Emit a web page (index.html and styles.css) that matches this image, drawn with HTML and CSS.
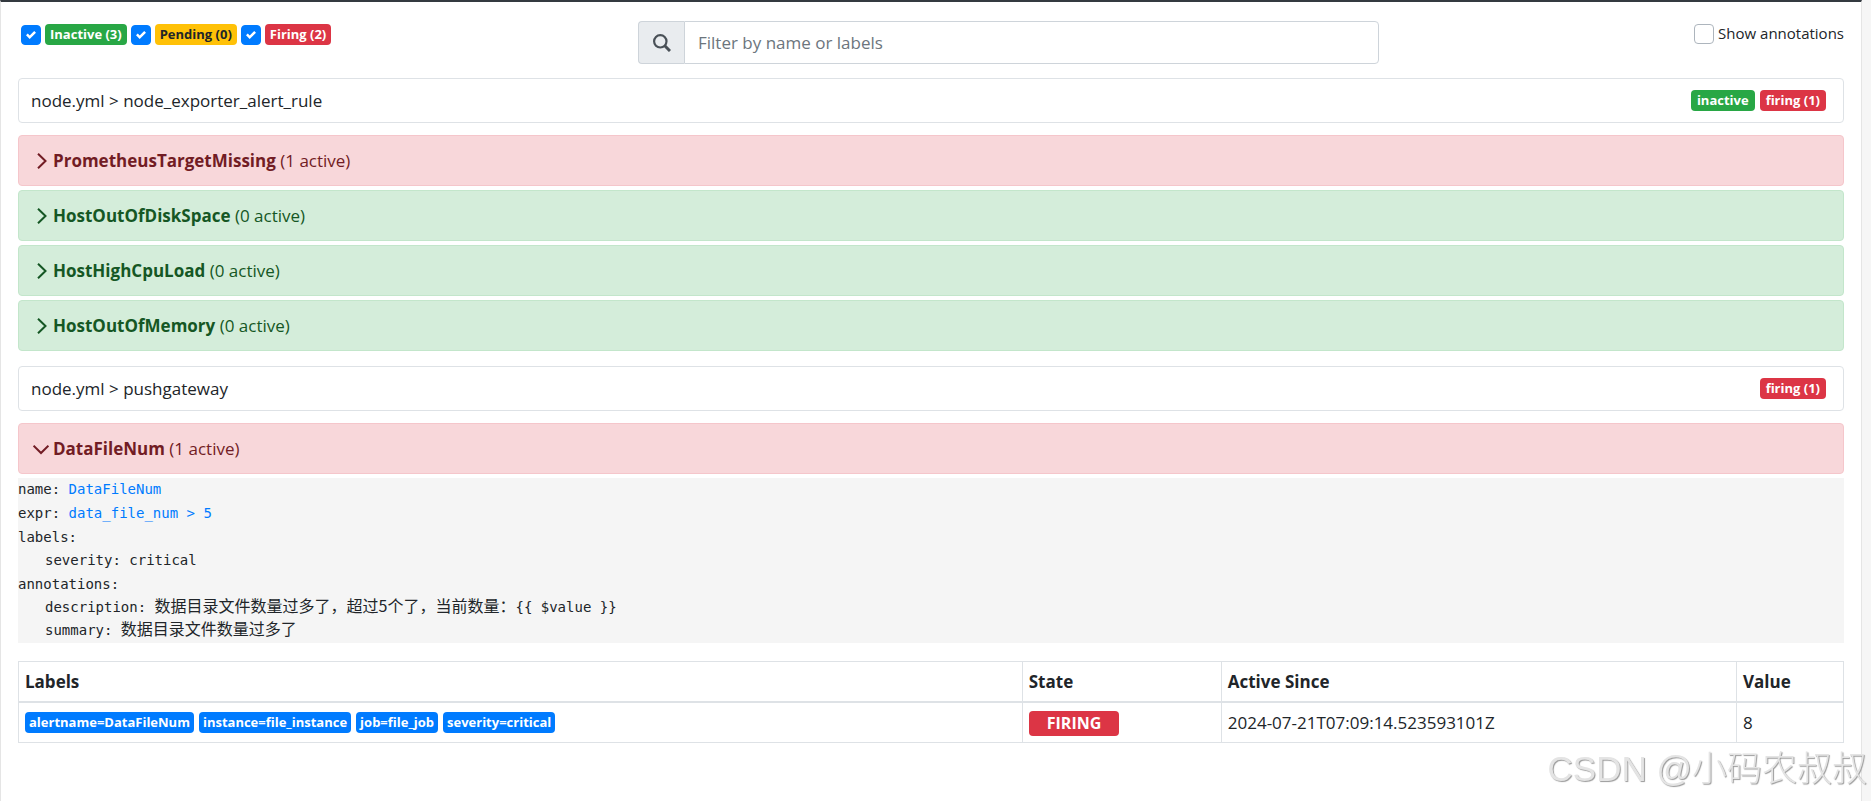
FILE: index.html
```html
<!DOCTYPE html>
<html lang="en">
<head>
<meta charset="utf-8">
<title>Alerts</title>
<meta name="viewport" content="width=device-width, initial-scale=1">
<link rel="stylesheet" href="styles.css">
</head>
<body>
<main class="page">
  <form class="toolbar">
    <div class="states">
      <input class="check" type="checkbox" id="inactive" checked>
      <label class="badge success" for="inactive">Inactive (3)</label>
      <input class="check" type="checkbox" id="pending" checked>
      <label class="badge warning" for="pending">Pending (0)</label>
      <input class="check" type="checkbox" id="firing" checked>
      <label class="badge danger" for="firing">Firing (2)</label>
    </div>
    <div class="search">
      <label class="search-icon" for="filter" aria-label="Filter">
        <svg width="18" height="18" viewBox="0 0 18 18" fill="none" stroke="currentColor"><circle cx="7.3" cy="7.3" r="6.2" stroke-width="2.2"/><path d="M11.8 11.8l5.2 5.2" stroke-width="3"/></svg>
      </label>
      <input class="search-input" id="filter" type="text" placeholder="Filter by name or labels">
    </div>
    <div class="annotations-toggle">
      <input class="check" type="checkbox" id="annotations">
      <label for="annotations">Show annotations</label>
    </div>
  </form>

  <section class="group">
    <header class="group-head">
      <span>node.yml &gt; node_exporter_alert_rule</span>
      <span class="group-badges"><span class="badge success">inactive</span><span class="badge danger">firing (1)</span></span>
    </header>
    <button class="rule rule-danger" type="button"><svg class="chevron" viewBox="0 0 16 16"><path d="M5 .8l7.5 7.2L5 15.2"/></svg><span><strong>PrometheusTargetMissing</strong> (1 active)</span></button>
    <button class="rule rule-success" type="button"><svg class="chevron" viewBox="0 0 16 16"><path d="M5 .8l7.5 7.2L5 15.2"/></svg><span><strong>HostOutOfDiskSpace</strong> (0 active)</span></button>
    <button class="rule rule-success" type="button"><svg class="chevron" viewBox="0 0 16 16"><path d="M5 .8l7.5 7.2L5 15.2"/></svg><span><strong>HostHighCpuLoad</strong> (0 active)</span></button>
    <button class="rule rule-success" type="button"><svg class="chevron" viewBox="0 0 16 16"><path d="M5 .8l7.5 7.2L5 15.2"/></svg><span><strong>HostOutOfMemory</strong> (0 active)</span></button>
  </section>

  <section class="group">
    <header class="group-head">
      <span>node.yml &gt; pushgateway</span>
      <span class="group-badges"><span class="badge danger">firing (1)</span></span>
    </header>
    <button class="rule rule-danger" type="button" aria-expanded="true"><svg class="chevron" viewBox="0 0 16 16"><path d="M.6 4.6L8 12l7.4-7.4"/></svg><span><strong>DataFileNum</strong> (1 active)</span></button>
    <div class="definition">
      <div>name: <a href="#">DataFileNum</a></div>
      <div>expr: <a href="#">data_file_num &gt; 5</a></div>
      <div>labels:
        <div class="nested">severity: critical</div>
      </div>
      <div>annotations:
        <div class="nested">description: <span class="cjk" lang="zh">数据目录文件数量过多了，超过5个了，当前数量：</span>{{ $value }}</div>
        <div class="nested">summary: <span class="cjk" lang="zh">数据目录文件数量过多了</span></div>
      </div>
    </div>
    <table class="alerts">
      <thead>
        <tr><th class="col-labels">Labels</th><th class="col-state">State</th><th>Active Since</th><th class="col-value">Value</th></tr>
      </thead>
      <tbody>
        <tr>
          <td><div class="label-list"><span class="badge primary">alertname=DataFileNum</span><span class="badge primary">instance=file_instance</span><span class="badge primary">job=file_job</span><span class="badge primary">severity=critical</span></div></td>
          <td><span class="state danger">FIRING</span></td>
          <td>2024-07-21T07:09:14.523593101Z</td>
          <td>8</td>
        </tr>
      </tbody>
    </table>
  </section>
</main>
<div class="watermark" lang="zh">CSDN @小码农叔叔</div>
</body>
</html>
```
FILE: styles.css
```css
* { box-sizing: border-box; }

body {
  margin: 0;
  padding-right: 9px;
  background: #f6f6f6;
  color: #212529;
  font: 17px/27px "Open Sans", "Noto Sans", sans-serif;
}

.page {
  min-height: 100vh;
  padding: 19px 17px;
  border-top: 2px solid #343a40;
  border-left: 1px solid #e5e5e5;
  border-right: 1px solid #e5e5e5;
  background: #fff;
}

.toolbar {
  display: grid;
  grid-template-columns: 620px 1fr 465px;
  align-items: start;
  margin-bottom: 14px;
}

.states {
  display: flex;
  align-items: center;
  gap: 4px;
  padding: 3px;
}

.check {
  appearance: none;
  width: 20px;
  height: 20px;
  margin: 0;
  border: 1px solid #adb5bd;
  border-radius: 4px;
  background: #fff;
}

.check:checked {
  border-color: #007bff;
  background: #007bff url("data:image/svg+xml,%3Csvg xmlns='http://www.w3.org/2000/svg' viewBox='0 0 8 8'%3E%3Cpath fill='%23fff' d='M6.564.75l-3.59 3.612-1.538-1.55L0 4.26l2.974 2.99L8 2.193z'/%3E%3C/svg%3E") center / 10px no-repeat;
}

.badge {
  padding: 0 6px;
  border-radius: 4px;
  font-size: 13px;
  font-weight: 700;
  line-height: 21px;
  white-space: nowrap;
}

.states .badge { padding: 0 5px; }

.success { background: #28a745; color: #fff; }
.warning { background: #ffc107; color: #212529; }
.danger { background: #dc3545; color: #fff; }
.primary { background: #007bff; color: #fff; }

.search { display: flex; }

.search-icon {
  display: flex;
  align-items: center;
  justify-content: center;
  width: 46px;
  border: 1px solid #ced4da;
  border-right: 0;
  border-radius: 4px 0 0 4px;
  background: #e9ecef;
  color: #495057;
}

.search-input {
  flex: 1;
  min-width: 0;
  height: 43px;
  padding: 0 13px;
  border: 1px solid #ced4da;
  border-radius: 0 4px 4px 0;
  color: #495057;
  font: inherit;
}

.search-input::placeholder { color: #6c757d; opacity: 1; }

.annotations-toggle {
  display: flex;
  align-items: center;
  justify-content: flex-end;
  gap: 4px;
  font-size: 15px;
  line-height: 25px;
}

.group { margin-bottom: 15px; }

.group-head {
  display: flex;
  align-items: center;
  justify-content: space-between;
  margin-bottom: 12px;
  padding: 8px 17px 8px 12px;
  border: 1px solid #dee2e6;
  border-radius: 4px;
}

.group-badges { display: flex; gap: 5px; }

.rule {
  display: flex;
  align-items: center;
  gap: 4px;
  width: 100%;
  margin: 0 0 4px;
  padding: 11px 14px;
  border: 1px solid;
  border-radius: 4px;
  font: inherit;
  text-align: left;
}

.rule:last-child { margin-bottom: 0; }

.rule-danger { border-color: #f5c6cb; background: #f8d7da; color: #721c24; }
.rule-success { border-color: #c3e6cb; background: #d4edda; color: #155724; }

.chevron {
  width: 16px;
  height: 16px;
  fill: none;
  stroke: currentColor;
  stroke-width: 2;
}

.definition {
  display: flex;
  flex-direction: column;
  gap: 1px;
  padding-bottom: 1px;
  margin-bottom: 18px;
  background: #f5f5f5;
  font: 14px/23px "DejaVu Sans Mono", "Noto Sans CJK SC", monospace;
}

.definition a { color: #007bff; text-decoration: none; }
.nested { padding-left: 27px; }
.cjk { font: 16px/16px "Noto Sans CJK SC", sans-serif; }

.alerts {
  width: 100%;
  border-collapse: collapse;
  table-layout: fixed;
}

.alerts th,
.alerts td {
  padding: 6px;
  border: 1px solid #dee2e6;
  text-align: left;
}

.alerts th { border-bottom-width: 2px; }
.col-labels { width: 55%; }
.col-state { width: 199px; }
.col-value { width: 107px; }

.label-list { display: flex; flex-wrap: wrap; gap: 5px; }
.label-list .badge { padding: 0 4px; }

.state {
  display: inline-block;
  padding: 0 18px;
  border-radius: 4px;
  font-weight: 700;
  font-size: 16px;
  line-height: 25px;
}

.watermark {
  position: fixed;
  right: 4px;
  bottom: 8px;
  color: #e4e4e4;
  font: 300 35px/48px "Liberation Sans", "Noto Sans CJK SC", sans-serif;
  text-shadow: 1px 1px 1px #999;
}
```
